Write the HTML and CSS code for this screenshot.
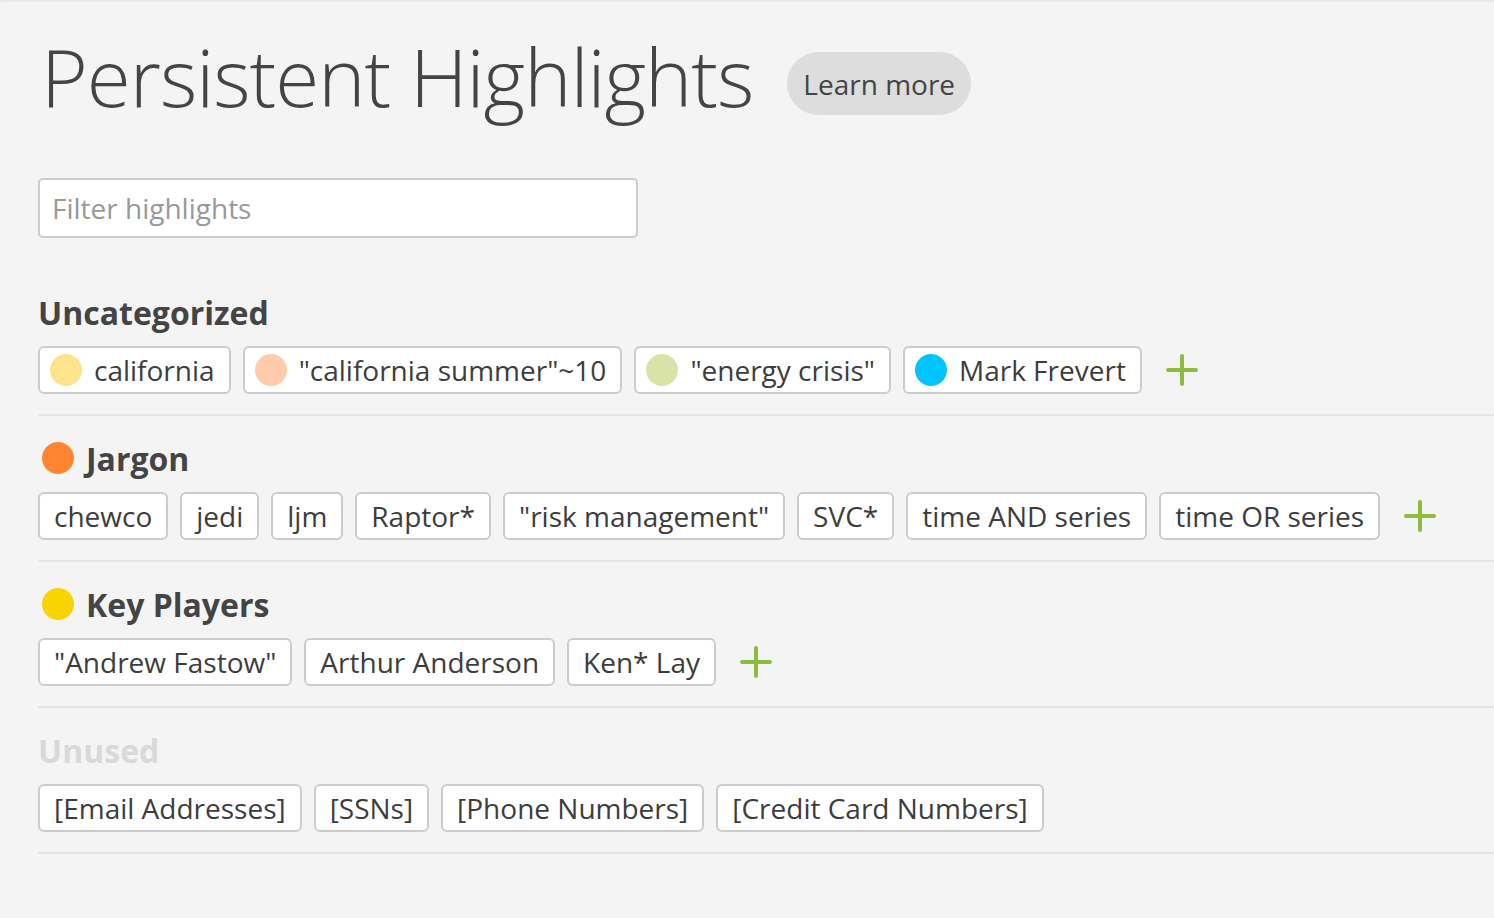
FILE: index.html
```html
<!DOCTYPE html>
<html lang="en">
<head>
    <meta charset="UTF-8">
    <title>Persistent Highlights</title>
    <link rel="stylesheet" href="styles.css">
</head>
<body>

<div class="page">
    <div class="title-row">
        <h1>Persistent Highlights</h1>
        <button class="learn-more">Learn more</button>
    </div>

    <input type="text" class="filter-input" placeholder="Filter highlights">

    <div class="group">
        <h2 class="group-title">Uncategorized</h2>
        <div class="chips">
            <span class="chip with-dot"><span class="dot dot-california"></span>california</span>
            <span class="chip with-dot"><span class="dot dot-summer"></span>"california summer"~10</span>
            <span class="chip with-dot"><span class="dot dot-energy"></span>"energy crisis"</span>
            <span class="chip with-dot"><span class="dot dot-mark"></span>Mark Frevert</span>
            <span class="add-btn"></span>
        </div>
    </div>

    <div class="group">
        <h2 class="group-title"><span class="dot dot-jargon"></span>Jargon</h2>
        <div class="chips">
            <span class="chip">chewco</span>
            <span class="chip">jedi</span>
            <span class="chip">ljm</span>
            <span class="chip">Raptor*</span>
            <span class="chip">"risk management"</span>
            <span class="chip">SVC*</span>
            <span class="chip">time AND series</span>
            <span class="chip">time OR series</span>
            <span class="add-btn"></span>
        </div>
    </div>

    <div class="group">
        <h2 class="group-title"><span class="dot dot-players"></span>Key Players</h2>
        <div class="chips">
            <span class="chip">"Andrew Fastow"</span>
            <span class="chip">Arthur Anderson</span>
            <span class="chip">Ken* Lay</span>
            <span class="add-btn"></span>
        </div>
    </div>

    <div class="group">
        <h2 class="group-title unused">Unused</h2>
        <div class="chips">
            <span class="chip">[Email Addresses]</span>
            <span class="chip">[SSNs]</span>
            <span class="chip">[Phone Numbers]</span>
            <span class="chip">[Credit Card Numbers]</span>
        </div>
    </div>
</div>

</body>
</html>
```

FILE: styles.css
```css
:root {
    --text-color: #444;
    --border-color: #ccc;
    --rule-color: #e5e5e5;
    --add-color: #8cbd3c;
    --font-family: 'Open Sans', sans-serif;
}

html, body {
    margin: 0;
    height: 100%;
}

body {
    font-family: var(--font-family);
    background-color: #f4f4f4;
    color: var(--text-color);
    box-shadow: inset 0 3px 3px -2px rgba(0, 0, 0, 0.08);
}

.page {
    padding: 21px 0 0 38px;
}

.title-row {
    display: flex;
    align-items: flex-start;
    gap: 34px;
    margin-left: 3px;
}

h1 {
    margin: 0;
    font-size: 80px;
    font-weight: 300;
    line-height: 110px;
    letter-spacing: -1px;
}

.learn-more {
    font-family: var(--font-family);
    font-size: 28px;
    color: var(--text-color);
    background-color: #ddd;
    border: none;
    border-radius: 32px;
    height: 63px;
    padding: 0 16px;
    margin-top: 31px;
}

.filter-input {
    display: block;
    margin-top: 47px;
    width: 600px;
    height: 60px;
    box-sizing: border-box;
    padding: 0 12px;
    font-family: var(--font-family);
    font-size: 28px;
    color: var(--text-color);
    background-color: white;
    border: 2px solid var(--border-color);
    border-radius: 5px;
}

.filter-input::placeholder {
    color: #999;
}

.group {
    padding: 54px 0 20px;
    border-bottom: 2px solid var(--rule-color);
}

.group + .group {
    padding-top: 22px;
}

.group-title {
    display: flex;
    align-items: center;
    gap: 12px;
    margin: 0 0 14px;
    height: 40px;
    font-size: 32px;
    font-weight: 700;
}

.group-title.unused {
    color: #d9d9d9;
}

.group-title .dot {
    margin-left: 4px;
}

.chips {
    display: flex;
    flex-wrap: wrap;
    align-items: center;
    gap: 12px;
}

.chip {
    display: inline-flex;
    align-items: center;
    height: 48px;
    box-sizing: border-box;
    padding: 0 14px;
    font-size: 28px;
    color: #3d3d3d;
    background-color: white;
    border: 2px solid var(--border-color);
    border-radius: 6px;
    white-space: nowrap;
}

.chip.with-dot {
    padding-left: 10px;
    gap: 12px;
}

.dot {
    display: inline-block;
    width: 32px;
    height: 32px;
    border-radius: 50%;
    flex-shrink: 0;
}

.dot-california { background-color: #fde38c; }
.dot-summer { background-color: #ffcbaa; }
.dot-energy { background-color: #d9e2a7; }
.dot-mark { background-color: #00c4ff; }
.dot-jargon { background-color: #ff8533; }
.dot-players { background-color: #f9d400; }

.add-btn {
    position: relative;
    width: 32px;
    height: 32px;
    margin-left: 12px;
    cursor: pointer;
}

.add-btn::before,
.add-btn::after {
    content: "";
    position: absolute;
    background-color: var(--add-color);
    border-radius: 2px;
}

.add-btn::before {
    left: 0;
    right: 0;
    top: 14px;
    height: 4px;
}

.add-btn::after {
    top: 0;
    bottom: 0;
    left: 14px;
    width: 4px;
}
```
